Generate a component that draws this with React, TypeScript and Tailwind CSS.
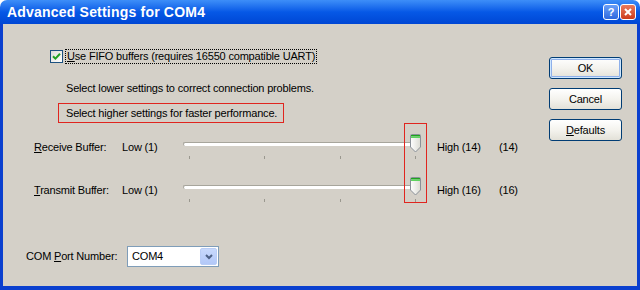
import React from "react";

const font = "font-['Liberation_Sans',Arial,sans-serif]";

// underlined access-key letter
function Key({ children }: { children: React.ReactNode }) {
  return <span className="underline underline-offset-[1px]">{children}</span>;
}

function CheckBox() {
  return (
    <span className="flex h-[13px] w-[13px] items-center justify-center border border-[#1c5180] bg-gradient-to-br from-[#dcdcd7] to-white">
      <svg width="9" height="9" viewBox="0 0 9 9">
        <path d="M1 4.2 L3.4 6.6 L8 1.8" fill="none" stroke="#21a121" strokeWidth="2" />
      </svg>
    </span>
  );
}

function Thumb() {
  return (
    <svg width="11" height="19" viewBox="0 0 11 19">
      <defs>
        <linearGradient id="tb" x1="0" y1="0" x2="1" y2="0">
          <stop offset="0" stopColor="#ffffff" />
          <stop offset="1" stopColor="#dcdcd4" />
        </linearGradient>
      </defs>
      <path d="M1.5 0.5 H9.5 A1 1 0 0 1 10.5 1.5 V13 L5.5 18 L0.5 13 V1.5 A1 1 0 0 1 1.5 0.5 Z" fill="url(#tb)" stroke="#8a9097" />
      <rect x="1" y="1" width="9" height="1.5" fill="#21a121" />
      <rect x="1" y="2.5" width="9" height="1.5" fill="#5fd35f" />
    </svg>
  );
}

function Slider() {
  return (
    <div className="relative h-[26px] w-[238px]">
      <div className="absolute left-0 right-[5px] top-[8px] h-[4px] rounded-[2px] border-t border-l border-[#a7a59c] bg-white" />
      <div className="absolute right-0 top-0">
        <Thumb />
      </div>
      {[6, 81, 157, 232].map((x) => (
        <div key={x} className="absolute top-[22px] h-[3px] w-px bg-[#9a988f]" style={{ left: x }} />
      ))}
    </div>
  );
}

function BufferRow({ label, k, high, value }: { label: string; k: string; high: string; value: string }) {
  return (
    <div className="flex items-start">
      <div className="mt-[5px] w-[88px]">
        <Key>{k}</Key>
        {label}
      </div>
      <div className="mt-[5px] w-[61px]">Low (1)</div>
      <Slider />
      <div className="mt-[5px] ml-[16px] w-[62px]">{high}</div>
      <div className="mt-[5px]">{value}</div>
    </div>
  );
}

function XpButton({ children, primary }: { children: React.ReactNode; primary?: boolean }) {
  return (
    <button
      className={`h-[22px] w-[73px] rounded-[3px] border border-[#003c74] bg-gradient-to-b from-white via-[#f4f3ee] to-[#e3e1d8] text-[11px] text-black ${
        primary ? "shadow-[inset_0_0_0_1px_#cee7ff,inset_0_0_0_2px_#8fb0ea]" : ""
      }`}
    >
      {children}
    </button>
  );
}

export default function App() {
  return (
    <div className={`flex h-[290px] w-[640px] flex-col ${font} whitespace-nowrap text-[11px] tracking-[-0.18px] text-black`}>
      {/* title bar */}
      <div className="flex h-[24px] items-center rounded-t-[7px] bg-gradient-to-b from-[#3d8ef8] via-[#0658e6] to-[#0046d4] pl-[7px] pr-[4px]">
        <span className="flex-1 text-[14px] font-bold tracking-[0.2px] text-white">Advanced Settings for COM4</span>
        <div className="flex gap-[1px]">
          <span className="flex h-[16px] w-[16px] items-center justify-center rounded-[3px] border border-white bg-gradient-to-b from-[#6a9ff7] to-[#2f69de] text-[11px] font-bold leading-none text-white">
            ?
          </span>
          <span className="flex h-[16px] w-[16px] items-center justify-center rounded-[3px] border border-white bg-gradient-to-b from-[#e97a5b] to-[#cd3a1a]">
            <svg width="8" height="8" viewBox="0 0 8 8">
              <path d="M1 1 L7 7 M7 1 L1 7" stroke="white" strokeWidth="2" />
            </svg>
          </span>
        </div>
      </div>

      {/* body */}
      <div className="flex flex-1 border-x-[3px] border-b-[4px] border-[#0a3fcf] bg-[#d4d0c8]">
        <div className="flex flex-1 flex-col">
          <div className="ml-[47px] mt-[24px] flex h-[16px] items-center gap-[1px]">
            <CheckBox />
            <span className="ml-[1px] border border-dotted border-black px-[1px] leading-[13px]">
              <Key>U</Key>se FIFO buffers (requires 16550 compatible UART)
            </span>
          </div>
          <div className="ml-[63px] mt-[17px] leading-[14px]">Select lower settings to correct connection problems.</div>
          <div className="ml-[55px] mt-[8px] flex h-[20px] w-[226px] items-center border border-[#e0251f] pl-[7px]">
            Select higher settings for faster performance.
          </div>
          <div className="ml-[31px] mt-[11px] flex flex-col gap-[17px]">
            <BufferRow label="eceive Buffer:" k="R" high="High (14)" value="(14)" />
            <BufferRow label="ransmit Buffer:" k="T" high="High (16)" value="(16)" />
          </div>
          <div className="ml-[23px] mt-[43px] flex items-center">
            <span className="w-[101px]">
              COM <Key>P</Key>ort Number:
            </span>
            <div className="flex h-[21px] w-[92px] items-center border border-[#7f9db9] bg-white pl-[4px] pr-[1px]">
              <span className="flex-1">COM4</span>
              <span className="flex h-[17px] w-[17px] items-center justify-center rounded-[2px] border border-[#b9cdf6] bg-gradient-to-b from-[#c8d9fc] to-[#b2c8f8]">
                <svg width="8" height="6" viewBox="0 0 8 6">
                  <path d="M1 1 L4 4 L7 1" fill="none" stroke="#4d6185" strokeWidth="2" />
                </svg>
              </span>
            </div>
          </div>
        </div>

        <div className="mr-[15px] mt-[33px] flex flex-col gap-[9px]">
          <XpButton primary>OK</XpButton>
          <XpButton>Cancel</XpButton>
          <XpButton>
            <Key>D</Key>efaults
          </XpButton>
        </div>
      </div>

      {/* red marker around both thumbs */}
      <div className="pointer-events-none absolute left-[404px] top-[123px] h-[80px] w-[23px] border border-[#e0251f]" />
    </div>
  );
}
